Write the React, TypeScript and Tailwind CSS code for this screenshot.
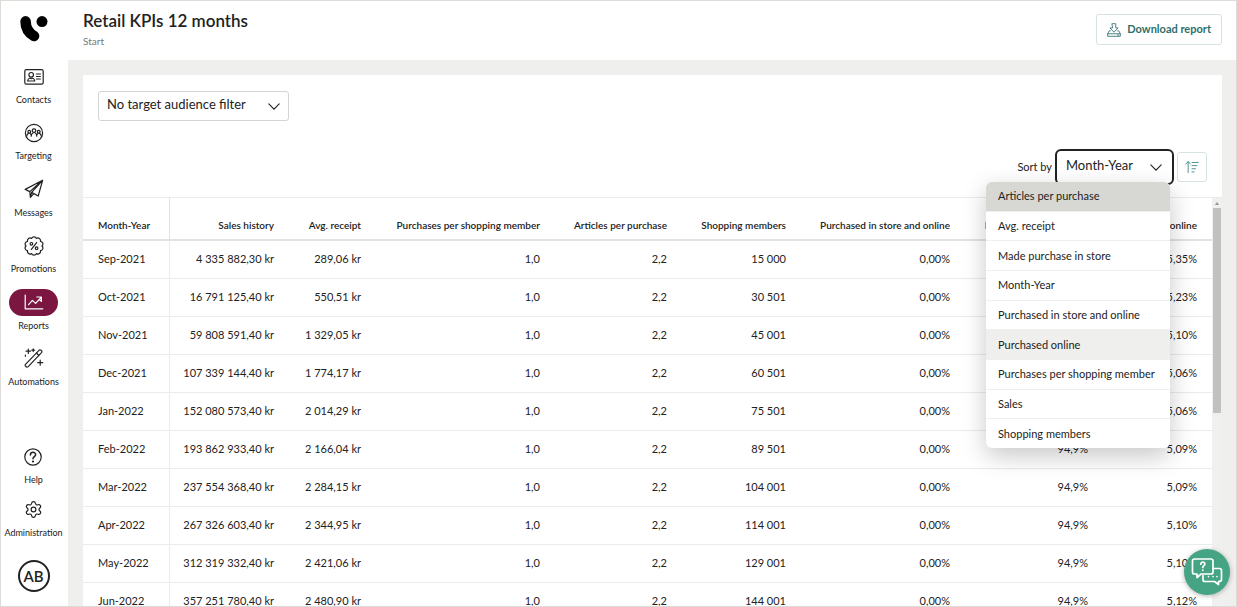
import React, { useState } from 'react';
import { Settings } from 'lucide-react';

type IconProps = { className?: string };

const Svg = ({ children, className = 'size-5' }: IconProps & { children: React.ReactNode }) => (
  <svg
    className={className}
    viewBox="0 0 20 20"
    fill="none"
    stroke="currentColor"
    strokeWidth="1.2"
    strokeLinecap="round"
    strokeLinejoin="round"
    aria-hidden="true"
  >
    {children}
  </svg>
);

const Logo = () => (
  <svg className="h-[26px] w-7" viewBox="0 0 28 26" aria-hidden="true">
    <path d="M5.6 5.4C5.6 12 9 17 14 20" fill="none" stroke="#000" strokeWidth="10.6" strokeLinecap="round" />
    <circle cx="22" cy="5.6" r="5.5" />
  </svg>
);

const ContactsIcon = () => (
  <Svg>
    <rect x=".8" y="2.6" width="18.4" height="14.6" rx="1.6" />
    <circle cx="7.2" cy="7.8" r="2.3" />
    <path d="M3.6 14c.2-2 1.2-2.7 2.5-3 .5 1 1.7 1 2.2 0 1.3.3 2.3 1 2.5 3zM12.4 7h4M12.4 9.5h4M12.4 12h4" />
  </Svg>
);

const TargetingIcon = () => (
  <Svg>
    <circle cx="10" cy="10" r="8.6" />
    <circle cx="10" cy="7.6" r="1.8" />
    <circle cx="5.3" cy="8.8" r="1.4" />
    <circle cx="14.7" cy="8.8" r="1.4" />
    <path d="M7.2 13.200c.1-2 .9-3 2-3.400M12.800 13.200c-.1-2-.9-3-2-3.400M2.800 13c.1-1.400.8-2.200 1.700-2.600M7.200 12c-.2-.9-.6-1.300-1.100-1.600M17.200 13c-.1-1.400-.8-2.200-1.700-2.600M12.800 12c.2-.9.6-1.300 1.100-1.600" />
  </Svg>
);

const MessagesIcon = () => (
  <Svg>
    <path d="M18.6 1.3 1.2 10.4l4.6 2.2zM18.6 1.3 7.6 13.4l6.6 3.6zM5.8 12.6l.6 5.8 1.2-5M6.4 18.4l3.4-3.7" />
  </Svg>
);

// Ten small bumps round a circle
const scallops = Array.from({ length: 10 }, (_, i) => {
  const angle = (i * Math.PI) / 5;
  const point = `${(10 + 8 * Math.cos(angle)).toFixed(2)} ${(10 + 8 * Math.sin(angle)).toFixed(2)}`;
  return i === 0 ? `M${point}` : `A2.7 2.7 0 0 1 ${point}`;
}).join('');

const PromotionsIcon = () => (
  <Svg>
    <path d={`${scallops}A2.7 2.7 0 0 1 18 10Z`} />
    <circle cx="7.4" cy="7.8" r="1.3" />
    <circle cx="12.6" cy="12.2" r="1.3" />
    <path d="m12.6 6.6-5.2 6.800" />
  </Svg>
);

const ReportsIcon = () => (
  <Svg>
    <path d="M1.200 3v13.800h17.600M4.600 12.600l3.800-4.200 3.200 3L16.600 6M12.800 5h4.600v4.400l-1.900-1.700" />
  </Svg>
);

const AutomationsIcon = () => (
  <Svg>
    <path d="M1.500 16.300 15 2.300c1.400-1.300 3.800.8 2.500 2.300L4.200 18.600c-1.500 1.300-3.900-.8-2.700-2.300zM12.400 5l2.600 2.500M4.300 1v4.400M2.100 3.200h4.400M9.200.8v2.800M7.800 2.200h2.800M16.200 12.200v5M13.700 14.700h5M1.400 7v1.200" />
  </Svg>
);

const HelpIcon = () => (
  <Svg>
    <circle cx="10" cy="10" r="8.2" />
    <path d="M7.4 8c0-3.600 5.400-3.400 5.200-.2-.1 1.900-2.600 1.900-2.600 4" strokeWidth="1.5" />
    <circle cx="10" cy="14.500" r=".5" fill="currentColor" />
  </Svg>
);

const DownloadIcon = () => (
  <Svg className="size-[14px]">
    <path d="M7.500 1h5v6h3.300L10 13.200 4.200 7h3.300zM4.800 11.200H3.200L1 15.400h18l-2.200-4.200h-1.600M1 15.400v3.600h18v-3.600M15 17.200h1.500" />
  </Svg>
);

const SortIcon = () => (
  <Svg className="size-[14px]">
    <path d="M4.500 18V2.500M1.200 5.800l3.300-3.600 3.300 3.600M10 3.500h9M10 8h7M10 12.500h5M10 17h3" />
  </Svg>
);

const SelectArrow = () => (
  <svg
    className="pointer-events-none absolute top-3 right-[9px] h-[7px] w-3"
    viewBox="0 0 12 7"
    fill="none"
    stroke="currentColor"
    strokeWidth="1.1"
    strokeLinecap="round"
    aria-hidden="true"
  >
    <path d="m.8.8 5.200 5.400L11.200.8" />
  </svg>
);

const ChatIcon = () => (
  <svg
    className="size-8"
    viewBox="0 0 32 32"
    fill="none"
    stroke="currentColor"
    strokeWidth="1.7"
    strokeLinecap="round"
    strokeLinejoin="round"
    aria-hidden="true"
  >
    <path d="M12 19.500v4c0 1.400.8 2 2 2h9.500l4 3v-3c2 0 3-.8 3-2v-9c0-1.400-.8-2-2-2h-6" />
    <path d="M3.500 3h16.500c1.400 0 2 .8 2 2v11c0 1.400-.8 2-2 2h-10l-4 3.500V18H3.500c-1.400 0-2-.8-2-2V5c0-1.400.8-2 2-2z" />
    <path d="M9.800 8.200c0-2.800 4.200-2.600 4 0-.1 1.500-2 1.600-2 3.300M11.800 14.200v.1M17.500 20.500v.1M22 20.500v.1M26 20.500v.1" />
  </svg>
);

interface NavItemProps {
  label: string;
  icon: React.ReactNode;
  active?: boolean;
}

const NavItem = ({ label, icon, active }: NavItemProps) => (
  <a href="#" aria-current={active ? 'page' : undefined} className="flex flex-col items-center gap-1">
    <span
      className={`flex h-[27px] w-[49px] items-center justify-center rounded-full ${
        active ? 'bg-[#7a1640] text-white' : 'text-[#222]'
      }`}
    >
      {icon}
    </span>
    <span className="text-[9px] leading-3 text-[#222]">{label}</span>
  </a>
);

const mainNav: NavItemProps[] = [
  { label: 'Contacts', icon: <ContactsIcon /> },
  { label: 'Targeting', icon: <TargetingIcon /> },
  { label: 'Messages', icon: <MessagesIcon /> },
  { label: 'Promotions', icon: <PromotionsIcon /> },
  { label: 'Reports', icon: <ReportsIcon />, active: true },
  { label: 'Automations', icon: <AutomationsIcon /> },
];

const bottomNav: NavItemProps[] = [
  { label: 'Help', icon: <HelpIcon /> },
  { label: 'Administration', icon: <Settings size={19} strokeWidth={1.5} /> },
];

const sortOptions = [
  'Articles per purchase',
  'Avg. receipt',
  'Made purchase in store',
  'Month-Year',
  'Purchased in store and online',
  'Purchased online',
  'Purchases per shopping member',
  'Sales',
  'Shopping members',
];

const columns = [
  { label: 'Month-Year', width: 'w-[87px]' },
  { label: 'Sales history', width: 'w-[119px]' },
  { label: 'Avg. receipt', width: 'w-[87px]' },
  { label: 'Purchases per shopping member', width: 'w-[179px]' },
  { label: 'Articles per purchase', width: 'w-[127px]' },
  { label: 'Shopping members', width: 'w-[119px]' },
  { label: 'Purchased in store and online', width: 'w-[164px]' },
  { label: 'Made purchase in store', width: 'w-[138px]' },
  { label: 'Purchased online', width: 'w-[109px]' },
];

const rows = [
  ['Sep-2021', '4 335 882,30 kr', '289,06 kr', '1,0', '2,2', '15 000', '0,00%', '94,6%', '5,35%'],
  ['Oct-2021', '16 791 125,40 kr', '550,51 kr', '1,0', '2,2', '30 501', '0,00%', '94,8%', '5,23%'],
  ['Nov-2021', '59 808 591,40 kr', '1 329,05 kr', '1,0', '2,2', '45 001', '0,00%', '94,9%', '5,10%'],
  ['Dec-2021', '107 339 144,40 kr', '1 774,17 kr', '1,0', '2,2', '60 501', '0,00%', '94,9%', '5,06%'],
  ['Jan-2022', '152 080 573,40 kr', '2 014,29 kr', '1,0', '2,2', '75 501', '0,00%', '94,9%', '5,06%'],
  ['Feb-2022', '193 862 933,40 kr', '2 166,04 kr', '1,0', '2,2', '89 501', '0,00%', '94,9%', '5,09%'],
  ['Mar-2022', '237 554 368,40 kr', '2 284,15 kr', '1,0', '2,2', '104 001', '0,00%', '94,9%', '5,09%'],
  ['Apr-2022', '267 326 603,40 kr', '2 344,95 kr', '1,0', '2,2', '114 001', '0,00%', '94,9%', '5,10%'],
  ['May-2022', '312 319 332,40 kr', '2 421,06 kr', '1,0', '2,2', '129 001', '0,00%', '94,9%', '5,10%'],
  ['Jun-2022', '357 251 780,40 kr', '2 480,90 kr', '1,0', '2,2', '144 001', '0,00%', '94,9%', '5,12%'],
];

const Sidebar = () => (
  <nav className="flex w-[67px] shrink-0 flex-col items-center pt-[15px] pr-0.5 pb-3.5">
    <a href="#" aria-label="Home">
      <Logo />
    </a>
    <div className="mt-[21px] flex h-[325px] flex-col justify-between">
      {mainNav.map((item) => (
        <NavItem key={item.label} {...item} />
      ))}
    </div>
    <div className="mt-auto flex flex-col gap-2.5">
      {bottomNav.map((item) => (
        <NavItem key={item.label} {...item} />
      ))}
    </div>
    <button
      type="button"
      className="mt-[21px] flex size-8 shrink-0 items-center justify-center rounded-full border-2 border-[#222] text-[15px] font-semibold text-[#222]"
    >
      AB
    </button>
  </nav>
);

const SortMenu = ({ onSelect }: { onSelect: (value: string) => void }) => (
  <div
    role="listbox"
    aria-label="Sort by"
    className="absolute top-full right-px z-20 flex h-[266px] w-[184px] flex-col overflow-hidden rounded-md bg-white shadow-[0_8px_24px_rgba(0,0,0,0.22)]"
  >
    {sortOptions.map((option, i) => (
      <button
        key={option}
        type="button"
        role="option"
        aria-selected={i === 0}
        onClick={() => onSelect(option)}
        className={`flex-1 border-b border-[#efefed] px-3 text-left text-[11px] leading-4 whitespace-nowrap text-[#222] last:border-b-0 ${
          i === 0 ? 'bg-[#d7d8d3]' : option === 'Purchased online' ? 'bg-[#efefed]' : ''
        }`}
      >
        {option}
      </button>
    ))}
  </div>
);

const ReportTable = () => (
  <div className="flex min-h-0 flex-1 overflow-hidden border-t border-[#ebebeb]">
    <div className="min-w-0 flex-1 overflow-hidden">
      <table className="w-full table-fixed border-separate border-spacing-0 text-right text-[11px] leading-4 text-[#222]">
        <thead>
          <tr className="h-[43px]">
            {columns.map(({ label, width }, i) => (
              <th
                key={label}
                scope="col"
                className={`${width} border-b-2 border-[#e2e2e2] pr-[15px] pb-1.5 align-bottom text-[10px] font-semibold whitespace-nowrap ${
                  i === 0 ? 'border-r pl-[15px] text-left' : 'text-right'
                }`}
              >
                {label}
              </th>
            ))}
          </tr>
        </thead>
        <tbody>
          {rows.map((row) => (
            <tr key={row[0]} className="h-[38px]">
              {row.map((cell, i) => (
                <td
                  key={i}
                  className={`border-b border-[#ebebeb] pr-[15px] pb-px whitespace-nowrap ${
                    i === 0 ? 'border-r pl-[15px] text-left' : ''
                  }`}
                >
                  {cell}
                </td>
              ))}
            </tr>
          ))}
        </tbody>
      </table>
    </div>
    {/* Scroll track */}
    <div className="flex w-2.5 shrink-0 flex-col items-center bg-[#f0f0f0] px-px" aria-hidden="true">
      <svg className="h-2.5 w-2" viewBox="0 0 8 10" fill="#999">
        <path d="M4 4 6.200 7H1.800z" />
      </svg>
      <div className="h-[205px] w-full bg-[#c1c1c1]" />
    </div>
  </div>
);

export default function App() {
  const [sortBy, setSortBy] = useState('Month-Year');

  return (
    <div className="relative flex h-screen overflow-hidden border border-[#dedad5] bg-white font-['Lato',sans-serif] text-[#222]">
      <Sidebar />

      <div className="flex min-w-0 flex-1 flex-col">
        <header className="flex h-[59px] shrink-0 items-start justify-between pr-3.5 pl-[15px]">
          <div className="pt-2">
            <h1 className="text-[17px] leading-6 font-semibold text-[#222]">Retail KPIs 12 months</h1>
            <p className="text-[10px] leading-4 text-[#777]">Start</p>
          </div>
          <button
            type="button"
            className="mt-[13px] flex h-[31px] items-center gap-1.5 rounded-[3px] border border-[#d5e3e1] px-2.5 text-[11px] font-bold text-[#2f6f6b]"
          >
            <DownloadIcon />
            Download report
          </button>
        </header>

        <main className="flex min-h-0 flex-1 bg-[#efefed] pt-[15px] pr-3.5 pl-[15px]">
          <section className="flex min-w-0 flex-1 flex-col bg-white">
            <div className="px-[15px] pt-4">
              <div className="relative w-[191px]">
                <select
                  aria-label="Target audience filter"
                  className="h-[30px] w-full appearance-none rounded-[3px] border border-[#d4d4d4] bg-white px-2 pb-0.5 text-[13px] text-[#222]"
                >
                  <option>No target audience filter</option>
                </select>
                <SelectArrow />
              </div>
            </div>

            <div className="mt-[31px] mb-[15px] flex items-center justify-end gap-1.5 px-[15px]">
              <label htmlFor="sort-by" className="text-[11px] leading-4">
                Sort by
              </label>
              <div className="relative w-[113px]">
                <select
                  id="sort-by"
                  value={sortBy}
                  onChange={(e) => setSortBy(e.target.value)}
                  className="block h-[30px] w-full appearance-none rounded-[3px] bg-white px-2 pb-0.5 text-[13px] text-[#222] outline-2 outline-offset-1 outline-[#222]"
                >
                  {sortOptions.map((option) => (
                    <option key={option}>{option}</option>
                  ))}
                </select>
                <SelectArrow />
                <SortMenu onSelect={setSortBy} />
              </div>
              <button
                type="button"
                aria-label="Sort direction"
                className="flex size-[30px] items-center justify-center rounded-[3px] border border-[#d5e3e1] text-[#2f7f79]"
              >
                <SortIcon />
              </button>
            </div>

            <ReportTable />
          </section>
        </main>
      </div>

      {/* Support chat launcher */}
      <button
        type="button"
        aria-label="Open support chat"
        className="absolute right-1.5 bottom-[11px] z-30 flex size-[46px] items-center justify-center rounded-full bg-[#45a484] text-white shadow-[0_1px_5px_rgba(0,0,0,0.3)]"
      >
        <ChatIcon />
      </button>
    </div>
  );
}
